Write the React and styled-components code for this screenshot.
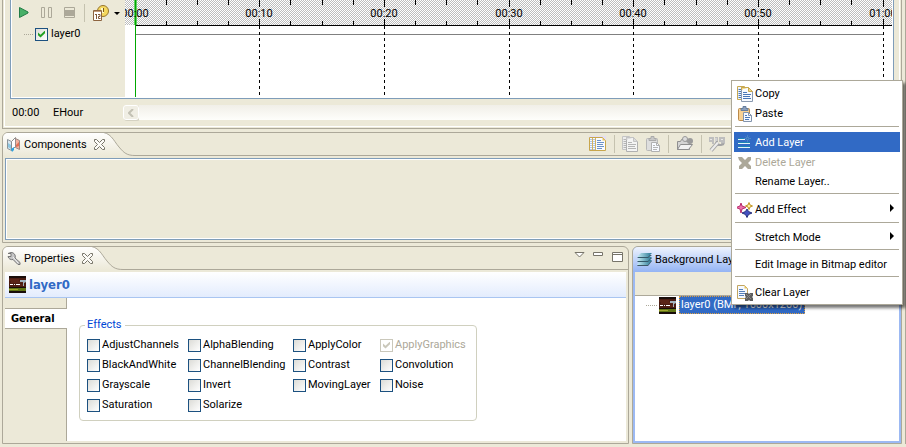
import React from 'react';
import styled, { createGlobalStyle, css } from 'styled-components';

const face = '#ece9d8';
const edge = '#aca899';
const blue = '#7f9db9';
const select = '#316ac5';

const Global = createGlobalStyle`
  * { box-sizing: border-box; }
  body { margin: 0; background: ${face}; }
  body, button, input, legend { font: 11px/14px Roboto, Tahoma, sans-serif; color: #000; }
  button { border: 0; padding: 0; background: none; }
  svg { display: block; flex: none; }
`;

const Page = styled.div`
  display: grid;
  grid-template-columns: minmax(0, 1fr) 1px;
  gap: 3px;
  min-height: 100vh;
  padding: 0 0 3px 2px;
  overflow: hidden;
`;
const Main = styled.main`
  position: relative;
  display: grid;
  grid-template-rows: auto auto 1fr;
  gap: 3px;
`;
const NextPane = styled.div`background: ${edge};`;

/* Timeline editor */
const Editor = styled.section`
  border: 1px solid ${edge};
  border-top: 0;
  padding: 0 1px 1px;
`;
const EditorInner = styled.div`
  border: 1px solid #fff;
  border-top: 0;
  padding: 0 5px;
`;
const Timeline = styled.div`
  display: grid;
  grid-template-columns: 113px minmax(0, 1fr);
  border: 1px solid ${blue};
  border-top: 0;
  padding: 0 1px 1px;
  background: #fff;
`;
const LayerSide = styled.div`background: ${face};`;
const PlayBar = styled.div`
  display: flex;
  align-items: center;
  height: 25px;
`;
const PlayButton = styled.button`
  display: flex;
  justify-content: center;
  gap: 5px;
  width: ${p => p.$wide ? 27 : 23}px;
`;
const Divider = styled.span`
  width: 1px;
  height: 18px;
  background: #c5c2af;
`;
const PlayDivider = styled(Divider)`margin: 0 8px 0 3px;`;
const TreeRow = styled.label`
  display: flex;
  align-items: center;
  gap: 3px;
  height: 18px;
  padding-left: ${p => p.$inset}px;
`;
const Dots = styled.span`
  width: ${p => p.$w}px;
  height: 1px;
  margin-right: -2px;
  background: repeating-linear-gradient(90deg, ${edge} 0 1px, transparent 1px 2px);
`;
const Chart = styled.svg`
  width: 100%;
  height: 97px;
  overflow: hidden;
  font: 11px Roboto, sans-serif;
`;
const TimeBar = styled.div`
  display: flex;
  align-items: center;
  height: 27px;
  padding-left: 2px;
`;
const TimeText = styled.span`width: ${p => p.$w}px;`;
const ScrollButton = styled.button`
  display: grid;
  place-items: center;
  width: 16px;
  height: 15px;
  border: 1px solid #fff;
  border-radius: 3px;
  box-shadow: 1px 1px 0 #d5d2c2;
  background: #f0eee4;
`;
const ScrollTrack = styled.div`
  flex: 1;
  height: 15px;
  background: linear-gradient(#f1efe8, #fefefb);
`;

/* Tabbed panels */
const Panel = styled.section`
  display: flex;
  flex-direction: column;
  min-width: 0;
  border: 1px solid ${edge};
  border-radius: 6px 6px 0 0;
  background: ${p => p.$active ? '#9cb9f3' : face};
  overflow: hidden;
`;
const PanelHead = styled.header`
  display: flex;
  height: 23px;
  ${p => p.$active && css`
    height: 25px;
    background: linear-gradient(#eef3fe, #94b4f4);
  `}
`;
const Tab = styled.div`
  display: flex;
  align-items: center;
  gap: 3px;
  padding-left: 4px;
  white-space: nowrap;
  ${p => !p.$active && css`background: linear-gradient(#fff, ${face});`}
`;
const CloseButton = styled.button`
  position: relative;
  margin-left: 4px;
  margin-right: -6px;
`;
const HeadTools = styled.div`
  display: flex;
  flex: 1;
  justify-content: flex-end;
  align-items: center;
  gap: ${p => p.$gap}px;
  padding-right: ${p => p.$right}px;
  border-bottom: 1px solid ${edge};
`;
const PanelBody = styled.div`
  display: flex;
  flex: 1;
  flex-direction: column;
  margin: ${p => p.$active ? '0 2px 2px' : '2px'};
  background: #fff;
`;
const EmptyView = styled.div`
  height: 82px;
  margin: 2px;
  border: 1px solid ${blue};
  outline: 1px solid #fff;
  outline-offset: -2px;
  background: ${face};
`;
const Bottom = styled.div`
  display: grid;
  grid-template-columns: 627fr 270fr;
  gap: 3px;
`;

/* Properties */
const Title = styled.h1`
  display: flex;
  align-items: center;
  gap: 3px;
  height: 26px;
  margin: 0;
  padding-left: 4px;
  border-bottom: 1px solid #a9c5f1;
  background: linear-gradient(#fff, #e3ecfd);
  color: ${select};
  font: bold 13px/16px "DejaVu Sans Condensed", sans-serif;
`;
const PropertyArea = styled.div`
  display: grid;
  grid-template-columns: 62px 1fr;
  flex: 1;
`;
const Sections = styled.nav`
  display: grid;
  grid-template-rows: 10px 21px 1fr;
`;
const SectionFill = styled.div`
  border-right: 1px solid ${edge};
  background: ${face};
`;
const SectionButton = styled.button`
  border: solid ${edge};
  border-width: 1px 0;
  padding-left: 6px;
  background: #fff;
  text-align: left;
  font: bold 11px/14px "DejaVu Sans Condensed", sans-serif;
`;
const PropertyPage = styled.div`padding: 20px 12px;`;
const Group = styled.fieldset`
  display: grid;
  grid-template-columns: 101px 105px 87px 89px;
  grid-auto-rows: 20px;
  width: fit-content;
  margin: 0;
  border: 1px solid #d0d0bf;
  border-radius: 4px;
  padding: 3px 7px 5px;
`;
const GroupName = styled.legend`
  margin-left: -2px;
  padding: 0 3px 0 2px;
  color: #0046d5;
`;
const CheckLabel = styled.label`
  display: flex;
  align-items: center;
  gap: 2px;
  color: ${p => p.$off ? '#aca899' : '#000'};
`;
const Check = styled.input.attrs({ type: 'checkbox' })`
  appearance: none;
  display: grid;
  place-items: center;
  width: 13px;
  height: 13px;
  margin: 0;
  border: 1px solid #1c5180;
  background: linear-gradient(135deg, #dcdcd7, #fff);
  &:checked::after {
    content: '';
    width: 7px;
    height: 7px;
    background: #21a121;
    clip-path: polygon(0 29%, 36% 62%, 100% 0, 100% 40%, 36% 100%, 0 68%);
  }
  &:disabled { border-color: #cac8bb; background: #fff; }
  &:disabled::after { background: #cac8bb; }
`;

/* Background layers */
const LayerTools = styled.div`
  height: 24px;
  border-bottom: 1px solid ${edge};
  background: ${face};
`;
const LayerItem = styled.div`
  display: flex;
  align-items: center;
  gap: 3px;
  height: 18px;
  padding-left: 11px;
`;
const LayerName = styled.span`
  padding: 1px 2px 1px 1px;
  border: 1px dotted #e0a040;
  background: ${select};
  color: #fff;
`;

/* Context menu */
const Menu = styled.div`
  position: absolute;
  top: 80px;
  left: 729px;
  width: 172px;
  border: 1px solid ${edge};
  padding: 2px;
  background: #fff;
  box-shadow: 3px 3px 3px rgba(0, 0, 0, 0.55);
`;
const MenuItem = styled.button`
  display: grid;
  grid-template-columns: 16px 1fr auto;
  align-items: center;
  gap: 2px;
  width: 100%;
  height: ${p => p.$plain ? 18 : 20}px;
  padding: 1px 5px 0 3px;
  text-align: left;
  white-space: nowrap;
  ${p => p.$on && css`background: ${select}; color: #fff;`}
  &:disabled { color: ${edge}; }
`;
const Rule = styled.hr`
  height: 1px;
  margin: 3px 1px 5px;
  border: 0;
  background: ${edge};
`;

/* Drawings */
const Svg = ({ w = 16, h = 16, children }) => (
  <svg width={w} height={h} viewBox={`0 0 ${w} ${h}`} aria-hidden="true">{children}</svg>
);
const CopyIcon = ({ off }) => {
  const line = off ? '#b5b5b5' : '#4a78b8', gold = off ? '#c4c4c4' : '#c8a850', rim = off ? '#b0b0b0' : '#8a9ab0';
  return (
    <Svg>
      <path d="M.5.5h7l2 2v11h-9z" fill={off ? '#ededed' : '#eef4fc'} stroke={gold} />
      <path d="M1.500 3.500h3M1.500 5.500h3M1.500 7.500h3M1.500 9.500h3M1.500 11.500h3" stroke={line} />
      <path d="M4.500 1.500h7l4 4v10h-11z" fill={off ? '#f4f4f4' : '#f8fbff'} stroke={rim} />
      <path d="M4.500 4V1.500h7l4 4h-4v-4" fill={off ? '#ddd' : '#f1d98c'} stroke={gold} />
      <path d="M6 5h4v-2h-4z" fill={off ? '#f4f4f4' : '#f8fbff'} />
      <path d="M6 6.500h4M6 8.500h8M6 10.500h7M6 12.500h8" stroke={line} />
    </Svg>
  );
};
const PasteIcon = ({ off }) => (
  <Svg>
    <rect x="1.500" y="2.500" width="11" height="12" rx="1" fill={off ? '#dedede' : '#f8d193'} stroke={off ? '#b8b8b8' : '#bb8a49'} />
    <path d="M4 4.500V2.500h2V.5h3v2h2v2z" fill={off ? '#c8c8c8' : '#8ba0bd'} stroke={off ? '#aaa' : '#657c9c'} />
    <path d="M6.500 6.500h5l3 3v6h-8z" fill="#f7faff" stroke={off ? '#b0b0b0' : '#8394ac'} />
    <path d="M11.500 6.500v3h3" fill="none" stroke={off ? '#b0b0b0' : '#8394ac'} />
    <path d="M8 9.500h2M8 11.500h5M8 13.500h4" stroke={off ? '#b5b5b5' : '#4a78b8'} />
  </Svg>
);
const ListIcon = () => (
  <Svg w={18}>
    <rect x="0" y="0" width="17" height="4" fill="#e4def2" />
    <path d="M.5 1.500h13l3 3v10H.5z" fill="#f8fbff" stroke="#c8a64c" />
    <path d="M3.500 2v12M6.500 2v12" stroke="#d1b361" />
    <path d="M2 3v11M5 3v11" stroke="#6c93c8" strokeDasharray="1 1" />
    <path d="M13.500 1.500v3h3z" fill="#e7c45d" />
    <path d="M8 4.500h4M8 6.500h7M8 8.500h6M8 10.500h7M8 12.500h5" stroke="#6c93c8" />
  </Svg>
);
const FolderIcon = () => (
  <Svg w={18}>
    <path d="M1.500 13.500v-8h3l1-2h4l1 2h3v8z" fill="#d4d4d4" stroke="#909090" />
    <circle cx="9" cy="3" r="2.500" fill="#ddd" stroke="#999" />
    <circle cx="14" cy="5" r="3" fill="#9b9b9b" />
    <path d="M1.500 13.500l3-5h12l-4 5z" fill="#f2f2f2" stroke="#8e8e8e" />
  </Svg>
);
const ToolsIcon = () => (
  <Svg w={18}>
    <path d="M0 1h5v7H3V6H0zM6 1h3v6H6zM10 1h6v7h-4V6h-2z" fill="#bebebe" />
    <path d="M1 3.500h2M12 3.500h2M7 2v4" stroke="#e8e8e8" />
    <path d="M2 14.500l7-8" stroke="#a4a4a4" strokeWidth="4" />
    <path d="M8 5v4h4l3-1" fill="none" stroke="#a4a4a4" strokeWidth="2" />
    <path d="M2 14.500l7-8" stroke="#ececec" strokeWidth="2" />
  </Svg>
);
const ClockIcon = () => (
  <Svg w={16}>
    <circle cx="10" cy="6" r="5.500" fill="#f5d85e" stroke="#96752e" />
    <path d="M9 3v4h2" fill="none" stroke="#fff8c8" strokeWidth="2" />
    <path d="M10.500 3v4" stroke="#7a5b1c" />
    <path d="M.5 5.500h8v10h-8z" fill="#fff" stroke="#8d6440" />
    <path d="M1 6.500h7" stroke="#c39a79" />
    <path d="M2 9.500h1.500M3.500 9v5M5 9.500h2v2h-1.500v2H7.500" fill="none" stroke="#81583a" />
  </Svg>
);
const MapIcon = () => (
  <Svg w={14}>
    <path d="M.5 2.500l4 2v9l-4-2z" fill="#d8e5ee" stroke="#8c959b" />
    <path d="M4.500 4.500l4-4v9l-4 4z" fill="#fff" stroke="#8c8c8c" />
    <path d="M8.500 1.500l4 2v9l-4-2z" fill="#f2b29f" stroke="#9a8b87" />
    <path d="M1 6l3 2v4L1 10z" fill="#8dc7e2" />
    <path d="M4 12l3-2v3l-2 2z" fill="#30a3de" />
    <path d="M9 8l3-3v4l-3 1z" fill="#e47054" />
  </Svg>
);
const WrenchIcon = () => (
  <Svg w={14} h={14}>
    <path d="M1 1.500h3v3h-3a4 4 0 0 0 5 3l5 5q3 1 2-2L8 6a4 4 0 0 0-4-5.500z" fill="#c6c6c6" stroke="#777" />
    <path d="M6 5l5 6" stroke="#f2f2f2" />
  </Svg>
);
const CloseIcon = () => (
  <Svg w={11} h={11}>
    <path d="M.5.5h2l3 3 3-3h2v2l-3 3 3 3v2h-2l-3-3-3 3h-2v-2l3-3-3-3z" fill="#fcfbf7" stroke="#777469" />
  </Svg>
);
const Thumb = () => (
  <Svg w={17} h={17}>
    <path d="M0 0h17v17H0z" fill="#190d0a" />
    <path d="M0 2h17v9H0z" fill="#4a1c12" />
    <path d="M0 4h10M2 6h12M9 9h6" stroke="#6a2c1c" />
    <path d="M1 8.500h3M5 8.500h1M7 8.500h4" stroke="#fff" />
    <path d="M11 4h6v2l-2 1v3h-1V6h-3z" fill="#a3b4bf" />
    <path d="M0 12h17v3H0z" fill="#5f7414" />
    <path d="M0 13.500h9" stroke="#a0a62d" />
  </Svg>
);
const LayersIcon = () => (
  <Svg w={15}>
    <defs>
      <linearGradient id="sheet"><stop stopColor="#c9f0f8" /><stop offset="1" stopColor="#247391" /></linearGradient>
    </defs>
    <path d="M4 9h11l-4 5H0z" fill="#3e5868" />
    <path d="M4 8h11l-4 5H0z" fill="url(#sheet)" />
    <path d="M4 6h11l-4 4H0z" fill="#34586a" />
    <path d="M4 5h11l-4 4H0z" fill="url(#sheet)" />
    <path d="M4 3h11l-4 3H0z" fill="#34586a" />
    <path d="M4 1h11l-4 4H0z" fill="url(#sheet)" />
  </Svg>
);
const AddLayerIcon = () => (
  <Svg>
    <path d="M1 3.500h7M1 7.500h12M1 11.500h12" stroke="#1d86b4" />
    <path d="M1 4.500h7M1 8.500h12M1 12.500h12" stroke="#e6f4fa" />
    <path d="M10.500 0v7M7 3.500h7M8.500 1.500l4 4M12.500 1.500l-4 4" stroke="#4a86c4" />
    <path d="M10 3h1v1h-1z" fill={select} />
  </Svg>
);
const DeleteIcon = () => (
  <Svg><path d="M1 2h4l3 3 3-3h3v3l-3 3 3 3v3h-3l-3-3-3 3H2v-3l3-3-3-3z" fill={edge} /></Svg>
);
const EffectIcon = () => (
  <Svg>
    <path d="M4 1l1 3 4 1.500-4 1.500-1 4-1-4-4-1.500 4-1.500z" fill="#ec72ac" stroke="#b82d6d" />
    <path d="M12 .5l1 2.500 2.500 1L13 5l-1 2.500L11 5 8.500 4 11 3z" fill="#fff3a0" stroke="#c19525" />
    <path d="M10 7l1.500 2.500L15 11l-3.500 1.500L10 15.500l-1.500-3L5 11l3.500-1.500z" fill="#4350bf" stroke="#29337f" />
  </Svg>
);
const ClearIcon = () => (
  <Svg>
    <path d="M.5.5h7l3 3v10h-10z" fill="#f5f9ff" stroke="#c2a560" />
    <path d="M7.500.5v3h3z" fill="#e8c65f" />
    <path d="M2 4.500h4M2 6.500h6M2 8.500h6M2 10.500h5" stroke="#5680bb" />
    <path d="M8 8h3l1 1 1-1h3v3l-1 1 1 1v3h-3l-1-1-1 1H8v-3l1-1-1-1z" fill="#5e5e5e" />
    <path d="M9 9l5 5M14 9l-5 5" stroke="#888" />
  </Svg>
);
const Arrow = () => <Svg w={5} h={11}><path d="M0 0l4 4-4 4z" fill="currentColor" /></Svg>;
const TabCurve = () => (
  <svg width="36" height="23" viewBox="0 0 36 23">
    <defs>
      <linearGradient id="tab" x2="0" y2="1"><stop stopColor="#fff" /><stop offset="1" stopColor={face} /></linearGradient>
    </defs>
    <path d="M0-1C12-1 14 7 20 14C25 20 28 22.500 36 22.500V23H0z" fill="url(#tab)" />
    <path d="M0-1C12-1 14 7 20 14C25 20 28 22.500 36 22.500" fill="none" stroke={edge} />
  </svg>
);

const majors = ['00:00', '00:10', '00:20', '00:30', '00:40', '00:50', '01:00'];
const markX = n => Math.round(9.5 + n * 31.17);

const TimelineChart = () => (
  <Chart role="img" aria-label="Layer timeline">
    <defs>
      <pattern id="mesh" width="2" height="2" patternUnits="userSpaceOnUse">
        <path d="M0 0h2v2H0z" fill="#fff" />
        <path d="M0 0h1v1H0zM1 1h1v1H1z" fill="#bdbdbd" />
      </pattern>
    </defs>
    <g shapeRendering="crispEdges">
      <rect width="100%" height="25" fill="url(#mesh)" />
      <rect x="11" y="25" width="100%" height="1" fill="#000" />
      <rect x="11" y="34" width="747" height="1" fill="#808080" />
      <rect x="9" width="3" height="25" fill="#62cf62" />
      {Array.from({ length: 25 }, (_, n) => {
        const major = n % 4 === 0;
        return (
          <g key={n} fill="#000">
            <rect x={markX(n)} width="1" height={major ? 7 : 5} />
            <rect x={markX(n)} y={major ? 19 : 21} width="1" height={major ? 10 : 4} />
            {major && n > 0 && (
              <path d={`M${markX(n) + 0.5} 32V96`} stroke="#000" strokeDasharray="3 3" />
            )}
          </g>
        );
      })}
      <rect x="10" width="1" height="97" fill="#00a800" />
    </g>
    {majors.map((t, n) => (
      <text key={t} x={markX(n * 4)} y="17" textAnchor="middle">{t}</text>
    ))}
  </Chart>
);

const effects = [
  'AdjustChannels', 'AlphaBlending', 'ApplyColor', 'ApplyGraphics',
  'BlackAndWhite', 'ChannelBlending', 'Contrast', 'Convolution',
  'Grayscale', 'Invert', 'MovingLayer', 'Noise',
  'Saturation', 'Solarize',
];

const menuItems = [
  { text: 'Copy', icon: <CopyIcon /> },
  { text: 'Paste', icon: <PasteIcon /> },
  null,
  { text: 'Add Layer', icon: <AddLayerIcon />, on: true },
  { text: 'Delete Layer', icon: <DeleteIcon />, off: true },
  { text: 'Rename Layer..' },
  null,
  { text: 'Add Effect', icon: <EffectIcon />, more: true },
  null,
  { text: 'Stretch Mode', more: true },
  null,
  { text: 'Edit Image in Bitmap editor' },
  null,
  { text: 'Clear Layer', icon: <ClearIcon /> },
];

const PanelTab = ({ icon, text }) => (
  <>
    <Tab>
      {icon}
      <span>{text}</span>
      <CloseButton aria-label={`Close ${text}`}><CloseIcon /></CloseButton>
    </Tab>
    <TabCurve />
  </>
);

export default function App() {
  return (
    <>
      <Global />
      <Page>
        <Main>
          <Editor>
            <EditorInner>
              <Timeline>
                <LayerSide>
                  <PlayBar>
                    <PlayButton aria-label="Play">
                      <Svg w={10} h={11}><path d="M.5.5v10L9 6V5z" fill="#48b068" stroke="#227c46" /></Svg>
                    </PlayButton>
                    <PlayButton aria-label="Pause">
                      <Svg w={11} h={11}><path d="M.5.5h3v10h-3zM7.500.5h3v10h-3z" fill="none" stroke={edge} /></Svg>
                    </PlayButton>
                    <PlayButton aria-label="Stop">
                      <Svg w={11} h={11}><path d="M.5.5h10v10H.5z" fill="none" stroke={edge} /><path d="M1 3h9v6H1z" fill={edge} /></Svg>
                    </PlayButton>
                    <PlayDivider />
                    <PlayButton $wide aria-label="Time scale">
                      <ClockIcon />
                      <Svg w={6} h={16}><path d="M0 7h6l-3 3z" fill="#000" /></Svg>
                    </PlayButton>
                  </PlayBar>
                  <TreeRow $inset={12}>
                    <Dots $w={10} />
                    <Check defaultChecked />
                    layer0
                  </TreeRow>
                </LayerSide>
                <TimelineChart />
              </Timeline>
              <TimeBar>
                <TimeText $w={41}>00:00</TimeText>
                <TimeText $w={70}>EHour</TimeText>
                <ScrollButton aria-label="Scroll left">
                  <Svg w={6} h={8}><path d="M5 0L1 4l4 4" fill="none" stroke="#c3c1b4" strokeWidth="2" /></Svg>
                </ScrollButton>
                <ScrollTrack />
              </TimeBar>
            </EditorInner>
          </Editor>

          <Panel>
            <PanelHead>
              <PanelTab icon={<MapIcon />} text="Components" />
              <HeadTools $gap={7} $right={174}>
                <ListIcon />
                <Divider />
                <CopyIcon off />
                <PasteIcon off />
                <Divider />
                <FolderIcon />
                <Divider />
                <ToolsIcon />
              </HeadTools>
            </PanelHead>
            <EmptyView />
          </Panel>

          <Bottom>
            <Panel>
              <PanelHead>
                <PanelTab icon={<WrenchIcon />} text="Properties" />
                <HeadTools $gap={8} $right={5}>
                  <Svg w={11} h={15}><path d="M1 1.500h9L5.500 6z" fill="#fff" stroke="#777469" /></Svg>
                  <Svg w={11} h={15}><path d="M.5 1.500h9v3h-9z" fill="#fff" stroke="#777469" /></Svg>
                  <Svg w={11} h={15}><path d="M.5 1.500h10v9H.5zM.5 3.500h10" fill="#fff" stroke="#777469" /></Svg>
                </HeadTools>
              </PanelHead>
              <PanelBody>
                <Title><Thumb />layer0</Title>
                <PropertyArea>
                  <Sections>
                    <SectionFill />
                    <SectionButton>General</SectionButton>
                    <SectionFill />
                  </Sections>
                  <PropertyPage>
                    <Group>
                      <GroupName>Effects</GroupName>
                      {effects.map(name => {
                        const off = name === 'ApplyGraphics';
                        return (
                          <CheckLabel key={name} $off={off}>
                            <Check defaultChecked={off} disabled={off} />
                            {name}
                          </CheckLabel>
                        );
                      })}
                    </Group>
                  </PropertyPage>
                </PropertyArea>
              </PanelBody>
            </Panel>

            <Panel $active>
              <PanelHead $active>
                <Tab $active><LayersIcon />Background Layers</Tab>
              </PanelHead>
              <PanelBody $active>
                <LayerTools />
                <LayerItem>
                  <Dots $w={12} />
                  <Thumb />
                  <LayerName>layer0 (BMP, 1600x1200)</LayerName>
                </LayerItem>
              </PanelBody>
            </Panel>
          </Bottom>

          <Menu role="menu">
            {menuItems.map((item, i) => item ? (
              <MenuItem key={item.text} role="menuitem" $on={item.on} $plain={!item.icon} disabled={item.off}>
                {item.icon || <span />}
                <span>{item.text}</span>
                {item.more && <Arrow />}
              </MenuItem>
            ) : <Rule key={i} />)}
          </Menu>
        </Main>
        <NextPane />
      </Page>
    </>
  );
}
